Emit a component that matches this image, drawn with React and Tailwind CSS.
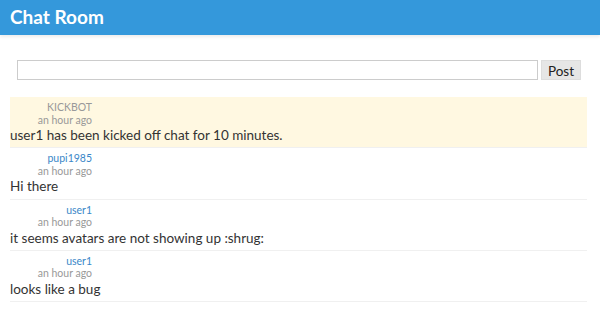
import React from "react";

const messages = [
  { user: "KICKBOT", bot: true, time: "an hour ago", text: "user1 has been kicked off chat for 10 minutes." },
  { user: "pupi1985", time: "an hour ago", text: "Hi there" },
  { user: "user1", time: "an hour ago", text: "it seems avatars are not showing up :shrug:" },
  { user: "user1", time: "an hour ago", text: "looks like a bug" },
];

const Message = ({ msg }) => (
  <div
    className={`h-[51.25px] border-b border-[#f0f0f0] ${msg.bot ? "bg-[#fff8e1]" : ""}`}
  >
    <div className="w-[82px] pt-[4px] text-right text-[10.5px] leading-[12.5px]">
      <div className={msg.bot ? "text-[#999]" : "text-[#3a87c8]"}>{msg.user}</div>
      <div className="text-[#999]">{msg.time}</div>
    </div>
    <div className="text-[13.5px] leading-[19px] text-[#333]">{msg.text}</div>
  </div>
);

export default function App() {
  return (
    <div className="min-h-[330px] bg-white font-['Lato',sans-serif]">
      {/* Header */}
      <div className="h-[35px] bg-[#3498db] px-[10px] shadow-[0_2px_3px_rgba(0,0,0,0.08)]">
        <h1 className="text-[19px] leading-[33px] font-bold text-white">Chat Room</h1>
      </div>

      {/* Composer */}
      <div className="flex items-center gap-[3px] pl-[17px] pr-[19px] pt-[25px]">
        <input
          type="text"
          className="h-[20px] flex-1 border border-[#ccc] bg-white px-1 text-[13px] outline-none"
        />
        <button className="h-[20px] w-[40px] border border-[#ddd] bg-[#e6e6e6] text-[13.5px] text-[#222]">
          Post
        </button>
      </div>

      {/* Messages */}
      <div className="mx-[10px] mr-[13px] mt-[17px]">
        {messages.map((m, i) => (
          <Message key={i} msg={m} />
        ))}
      </div>
    </div>
  );
}
